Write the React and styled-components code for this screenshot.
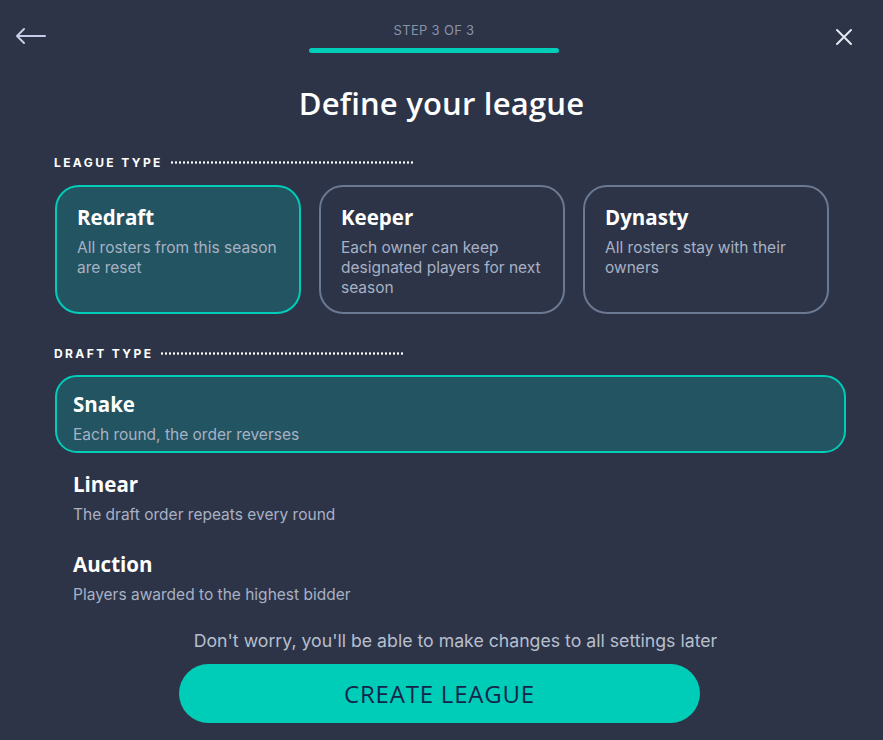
import React from 'react'
import styled, { createGlobalStyle } from 'styled-components'

const Global = createGlobalStyle`
body {
  margin: 0;
  background: #2d3448;
  font-family: Inter, "Liberation Sans", sans-serif;
}
`

const Page = styled.div`
width: 883px;
height: 740px;
background: #2d3448;
color: #fff;
display: flex;
flex-direction: column;
align-items: center;
overflow: hidden;
`

const TopBar = styled.div`
width: 100%;
height: 60px;
display: flex;
justify-content: space-between;
align-items: flex-start;
padding: 0 30px 0 15px;
box-sizing: border-box;
`

const IconBtn = styled.button`
background: none;
border: none;
padding: 0;
margin-top: ${p => p.top}px;
cursor: pointer;
display: flex;
`

const Steps = styled.div`
display: flex;
flex-direction: column;
align-items: center;
padding-top: 22px;
margin-right: 14px;
`

const StepLabel = styled.span`
font-size: 13px;
letter-spacing: 0.3px;
color: #8893a8;
`

const Progress = styled.div`
width: 250px;
height: 5px;
border-radius: 3px;
background: #00cdb8;
margin-top: 10px;
`

const Title = styled.h1`
font-family: "Open Sans", Inter, sans-serif;
font-size: 31px;
font-weight: 600;
margin: 22px 0 0;
letter-spacing: 0.2px;
`

const Section = styled.div`
width: 100%;
box-sizing: border-box;
padding: 0 37px 0 54px;
`

const Label = styled.div`
display: flex;
align-items: center;
font-size: 12px;
font-weight: 700;
letter-spacing: 2.4px;
margin: ${p => p.top}px 0 0;
height: 14px;
`

const Dots = styled.span`
width: ${p => p.w}px;
margin-left: 7px;
height: 3px;
background-image: radial-gradient(circle, #fff 1px, transparent 1.3px);
background-size: 4px 3px;
`

const CardRow = styled.div`
display: grid;
grid-template-columns: repeat(3, 246px);
gap: 18px;
margin-top: 16px;
padding-left: 1px;
`

const Card = styled.div`
height: 129px;
box-sizing: border-box;
border-radius: 24px;
border: 2px solid ${p => (p.active ? '#00cdb8' : '#6a7891')};
background: ${p => (p.active ? '#235461' : 'transparent')};
padding: 17px 20px 0;
`

const ItemTitle = styled.div`
font-family: "Open Sans", Inter, sans-serif;
font-size: 20.5px;
font-weight: 700;
line-height: 26px;
`

const Desc = styled.div`
font-size: 15.5px;
line-height: 20px;
color: #a8b1c4;
margin-top: ${p => p.top}px;
`

const List = styled.div`
display: flex;
flex-direction: column;
margin-top: 15px;
padding-left: 1px;
`

const Option = styled.div`
height: 78px;
box-sizing: border-box;
border-radius: 22px;
border: 2px solid ${p => (p.active ? '#00cdb8' : 'transparent')};
background: ${p => (p.active ? '#235461' : 'transparent')};
padding: 14px 16px 0;
margin-bottom: 2px;
`

const Note = styled.p`
font-size: 17.7px;
color: #b7bfcd;
margin: 15px 0 0 28px;
`

const CreateBtn = styled.button`
width: 521px;
height: 59px;
margin: 13px 4px 0 0;
border: none;
border-radius: 30px;
background: #00cdb8;
color: #14254a;
font-family: "Open Sans", Inter, sans-serif;
font-size: 24px;
letter-spacing: 0.8px;
cursor: pointer;
`

const leagueTypes = [
  { name: 'Redraft', desc: 'All rosters from this season are reset', active: true },
  { name: 'Keeper', desc: 'Each owner can keep designated players for next season' },
  { name: 'Dynasty', desc: 'All rosters stay with their owners' },
]

const draftTypes = [
  { name: 'Snake', desc: 'Each round, the order reverses', active: true },
  { name: 'Linear', desc: 'The draft order repeats every round' },
  { name: 'Auction', desc: 'Players awarded to the highest bidder' },
]

const App = () => {
  return (
    <Page>
      <Global />
      <TopBar>
        <IconBtn top={26}>
          <svg width="32" height="20" viewBox="0 0 32 20" fill="none" stroke="#c5cde6" strokeWidth="2" strokeLinecap="round" strokeLinejoin="round">
            <path d="M30 10H2M9 3L2 10l7 7" />
          </svg>
        </IconBtn>
        <Steps>
          <StepLabel>STEP 3 OF 3</StepLabel>
          <Progress />
        </Steps>
        <IconBtn top={28}>
          <svg width="18" height="18" viewBox="0 0 18 18" fill="none" stroke="#e3e7ef" strokeWidth="2" strokeLinecap="round">
            <path d="M2 2l14 14M16 2L2 16" />
          </svg>
        </IconBtn>
      </TopBar>
      <Title>Define your league</Title>
      <Section>
        <Label top={31}>LEAGUE TYPE<Dots w={244} /></Label>
        <CardRow>
          {leagueTypes.map(t => (
            <Card key={t.name} active={t.active}>
              <ItemTitle>{t.name}</ItemTitle>
              <Desc top={8}>{t.desc}</Desc>
            </Card>
          ))}
        </CardRow>
        <Label top={32}>DRAFT TYPE<Dots w={244} /></Label>
        <List>
          {draftTypes.map(t => (
            <Option key={t.name} active={t.active}>
              <ItemTitle>{t.name}</ItemTitle>
              <Desc top={8}>{t.desc}</Desc>
            </Option>
          ))}
        </List>
      </Section>
      <Note>Don't worry, you'll be able to make changes to all settings later</Note>
      <CreateBtn>CREATE LEAGUE</CreateBtn>
    </Page>
  )
}

export default App
